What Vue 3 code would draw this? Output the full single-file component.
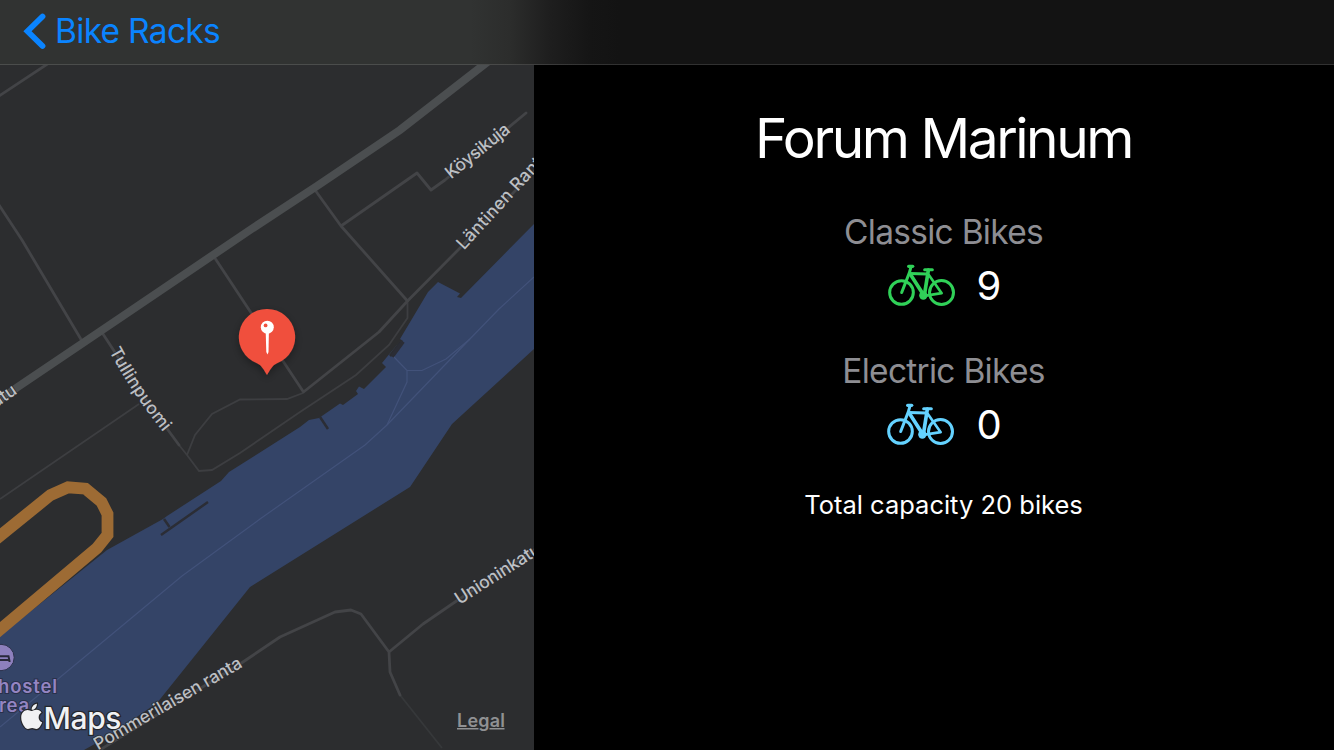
<script setup>
const title = 'Forum Marinum'
const bikes = [
  { label: 'Classic Bikes', count: 9, kind: 'classic' },
  { label: 'Electric Bikes', count: 0, kind: 'electric' },
]
</script>

<template>
  <div class="screen">
    <header class="nav">
      <a class="back">
        <svg width="24" height="38" viewBox="0 0 24 38">
          <path d="M19.5 4.5 4.5 19.2 19.5 34" />
        </svg>
        <span>Bike Racks</span>
      </a>
    </header>

    <main class="content">
      <svg class="map" width="534" height="685" viewBox="0 65 534 685">
        <defs>
          <path id="tullinpuomi" d="M109 351Q132.500 395 166 435.500" />
          <filter id="pinShadow" x="-40%" y="-40%" width="180%" height="180%">
            <feDropShadow dx="0" dy="3" stdDeviation="4" flood-color="#000" flood-opacity="0.35" />
          </filter>
        </defs>

        <!-- river -->
        <path
          class="water"
          d="M534 224 461 298 457 297 460 293.500 438 282 428 292 400 339 403 341 391 357 389 355 400 341 382 363 386 367 364 389 359 386.500 356 391 358 394 343 405 340 403.500 319 418 309 420 300 427 229 472 221 481 167 516 163 519 107 550 0 636V750H84L109 736 157 703 250 587 410 487 452 424 534 349Z"
        />
        <g class="pier">
          <path d="M403 341.500 392 356.500" stroke-width="4" />
          <path d="M320 417 328 429" />
          <path d="M161 535 208 502M164 519 169.500 527" />
        </g>
        <g class="ferry">
          <path d="M534 277 499 309 467 342 387 425 365 445 260 519 182 576 93 650 0 727" />
          <path d="M394 357 407 370.500H422L446 359 470 339M407 370.500V382L387 425" />
        </g>

        <!-- streets -->
        <g class="path">
          <path d="M0 499 139 404M179 445 187 455 199 471 212 470 240 453 300 412 356 375 389 345 407.500 318V302" />
          <path d="M187 455 195 435 212 414 240 399.500 287 399 303 393" />
          <path class="faint" d="M400 695 442 748" />
        </g>
        <g class="street">
          <path d="M-4 98 52 61M-3 202 22 240 82 341M103 334 146 400 179 445" />
          <path d="M215.500 259 303.500 392 379 332 407.500 301 460 248 540 165" />
          <path d="M315 190 341 226 407.500 301M341 226 417 173 431 190 445 180 526 113" />
          <path d="M90 756 240 664 280 637 335 612 351 610 361 614 389 652 390 672 400 695M389 652 423 624 455 602 540 546" />
        </g>
        <path class="road" d="M-6 404 17 387.500 117 320 250 230 317 186 400 130 490 60" />
        <path
          class="highway"
          d="M-10 544 50.500 495 68 487.300 85.500 488.700 101.500 502 107.500 514V535L97 548 -10 638"
        />

        <!-- labels -->
        <g class="label">
          <text transform="translate(451 179.500) rotate(-38.500)" textLength="77">Köysikuja</text>
          <text transform="translate(464 250.500) rotate(-47.500)" textLength="128">Läntinen Ranta</text>
          <text><textPath href="#tullinpuomi" textLength="98">Tullinpuomi</textPath></text>
          <text transform="translate(459.500 605) rotate(-32.500)" textLength="98">Unioninkatu</text>
          <text transform="translate(18 393) rotate(-34)" text-anchor="end">katu</text>
          <text transform="translate(98 750.500) rotate(-30)" textLength="168">Pommerilaisen ranta</text>
        </g>

        <!-- hostel -->
        <circle class="poi" cx="1" cy="657.500" r="13.200" />
        <path class="bed" d="M-6 656.300H8.500L9.500 661V662M-6 660H9" />
        <g class="poi-label">
          <text x="-2" y="692.500" textLength="59">hostel</text>
          <text x="-1" y="712" textLength="30">rea</text>
        </g>

        <!-- pin -->
        <g filter="url(#pinShadow)">
          <path class="pin" d="M267 309A28 28 0 0 0 257 363.200C262 365.500 264 370 267 375C270 370 272 365.500 277 363.200A28 28 0 0 0 267 309Z" />
        </g>
        <circle class="pin-head" cx="267.300" cy="327.200" r="6.500" />
        <circle class="pin-dot" cx="265.600" cy="325.400" r="1.900" />
        <path class="pin-head" d="M265.700 332H268.900L268.500 352L267.500 354.500L266.300 352Z" />

        <!-- attribution -->
        <g class="brand">
          <path
            transform="translate(21 702) scale(0.0555 0.0565)"
            d="M318.700 268.700c-.2-36.700 16.400-64.400 50-84.800-18.800-26.900-47.200-41.700-84.700-44.600-35.500-2.800-74.300 20.700-88.500 20.700-15 0-49.400-19.700-76.400-19.700C63.300 141.200 4 184.800 4 273.500q0 39.300 14.400 81.200c12.800 36.700 59 126.700 107.200 125.200 25.200-.6 43-17.900 75.800-17.900 31.800 0 48.300 17.900 76.400 17.900 48.600-.7 90.400-82.500 102.600-119.300-65.200-30.700-61.700-90-61.700-91.900zm-56.600-164.200c27.300-32.400 24.800-61.900 24-72.500-24.100 1.400-52 16.400-67.900 34.900-17.500 19.800-27.800 44.300-25.600 71.900 26.100 2 49.900-11.400 69.500-34.300z"
          />
          <text x="43.500" y="728.500" textLength="78">Maps</text>
        </g>
        <text class="legal" x="457" y="727" textLength="48">Legal</text>
        <path class="legal-line" d="M457 728.800H478.500M489.500 728.800H504.500" />
      </svg>

      <section class="details">
        <h1>{{ title }}</h1>
        <div v-for="b in bikes" :key="b.kind" class="group" :class="b.kind">
          <h2>{{ b.label }}</h2>
          <div class="row">
            <svg class="bike" width="68" height="42" viewBox="54 43.500 204 126">
              <circle cx="94.500" cy="129" r="35.500" />
              <circle cx="214.500" cy="129" r="36" />
              <path d="M116 50.500H128" stroke-width="10" />
              <path d="M123 52 118 70 95 129" />
              <path d="M120 72 172 73.500" />
              <path d="M164 60.500H187" stroke-width="9" />
              <path d="M175 62 163 138" stroke-width="11" />
              <path d="M121 74 158 132" stroke-width="11" />
              <path d="M163 139 215 131 176 76" stroke-width="8" />
              <circle class="crank" cx="160" cy="138" r="12.500" />
            </svg>
            <span class="count">{{ b.count }}</span>
          </div>
        </div>
        <p>Total capacity 20 bikes</p>
      </section>
    </main>
  </div>
</template>

<style>
body {
  margin: 0;
  background: #000;
}
</style>

<style scoped>
.screen {
  width: 1334px;
  height: 750px;
  display: flex;
  flex-direction: column;
  background: #000;
  overflow: hidden;
  font-family: Inter, 'Liberation Sans', sans-serif;
}
.nav {
  box-sizing: border-box;
  height: 65px;
  padding: 0 23px;
  display: flex;
  align-items: flex-start;
  border-bottom: 1px solid rgba(255, 255, 255, 0.13);
  background: linear-gradient(90deg, #313332 0, #313332 470px, #2c2d2c 510px, #1e1e1e 550px, #151515 590px, #131313 620px);
}
.back {
  display: flex;
  align-items: center;
  gap: 8px;
  padding-top: 11px;
  color: #0a84ff;
  font-size: 33.5px;
  line-height: 38px;
  letter-spacing: -0.7px;
}
.back path {
  fill: none;
  stroke: #0a84ff;
  stroke-width: 5.8;
  stroke-linecap: round;
  stroke-linejoin: miter;
}
.back span {
  padding-top: 1px;
}
.content {
  flex: 1;
  display: flex;
}
.map {
  display: block;
  flex: none;
  background: #2c2d2f;
}
.water {
  fill: #344467;
}
.pier path {
  fill: none;
  stroke: #2b2d35;
}
.pier {
  stroke-width: 2.5;
}
.ferry {
  fill: none;
  stroke: #42527a;
  stroke-width: 1.2;
}
.path {
  fill: none;
  stroke: #3d3e41;
  stroke-width: 1.8;
}
.faint {
  stroke: #36383a;
}
.street {
  fill: none;
  stroke: #434447;
  stroke-width: 2.8;
  stroke-linejoin: round;
  stroke-linecap: round;
}
.road {
  fill: none;
  stroke: #4b4e50;
  stroke-width: 8;
}
.highway {
  fill: none;
  stroke: #9d6b34;
  stroke-width: 11.8;
}
.label {
  fill: #bcbfc3;
  stroke: #2b2c2f;
  stroke-width: 1.5px;
  paint-order: stroke;
  font-size: 17.5px;
  font-weight: 550;
}
.poi {
  fill: #8d80bd;
  stroke: #29304a;
}
.bed {
  fill: none;
  stroke: #29293a;
  stroke-width: 2;
}
.poi-label {
  fill: #9485c2;
  stroke: #29304a;
  stroke-width: 2px;
  paint-order: stroke;
  font-size: 18.5px;
  font-weight: 600;
}
.pin {
  fill: #f0503e;
}
.pin-head {
  fill: #fff;
}
.pin-dot {
  fill: #f0503e;
}
.brand {
  fill: #f0f1f3;
  font-size: 30px;
  font-weight: 500;
  paint-order: stroke;
}
.brand text {
  stroke: #25262a;
  stroke-width: 2.5px;
}
.brand path {
  stroke: #25262a;
  stroke-width: 42;
  paint-order: stroke;
}
.legal {
  fill: #909193;
  font-size: 18px;
  font-weight: 600;
}
.legal-line {
  stroke: #909193;
  stroke-width: 1.6;
}
.details {
  flex: 1;
  padding: 39px 0 0 19px;
  display: flex;
  flex-direction: column;
  align-items: center;
  color: #fff;
}
h1,
h2,
p {
  margin: 0;
  font-weight: 400;
}
h1 {
  font-size: 55px;
  line-height: 68px;
  letter-spacing: -2.45px;
}
.group {
  display: flex;
  flex-direction: column;
  align-items: center;
  height: 99px;
  margin-top: 40px;
}
h2 {
  color: #8e8e93;
  font-size: 33.5px;
  line-height: 40px;
  letter-spacing: -0.73px;
}
.row {
  display: flex;
  align-items: center;
  gap: 21px;
  height: 42px;
  margin: 12px 0 0 2px;
}
.count {
  padding-top: 2px;
  font-size: 40px;
  line-height: 42px;
}
.bike {
  fill: none;
  stroke: currentColor;
  stroke-width: 9;
  stroke-linecap: round;
  stroke-linejoin: round;
}
.crank {
  fill: currentColor;
  stroke: none;
}
.classic .bike {
  color: #30d158;
}
.electric .bike {
  color: #64d2ff;
}
p {
  margin-top: 39px;
  font-size: 25.500px;
  line-height: 32px;
}
</style>
